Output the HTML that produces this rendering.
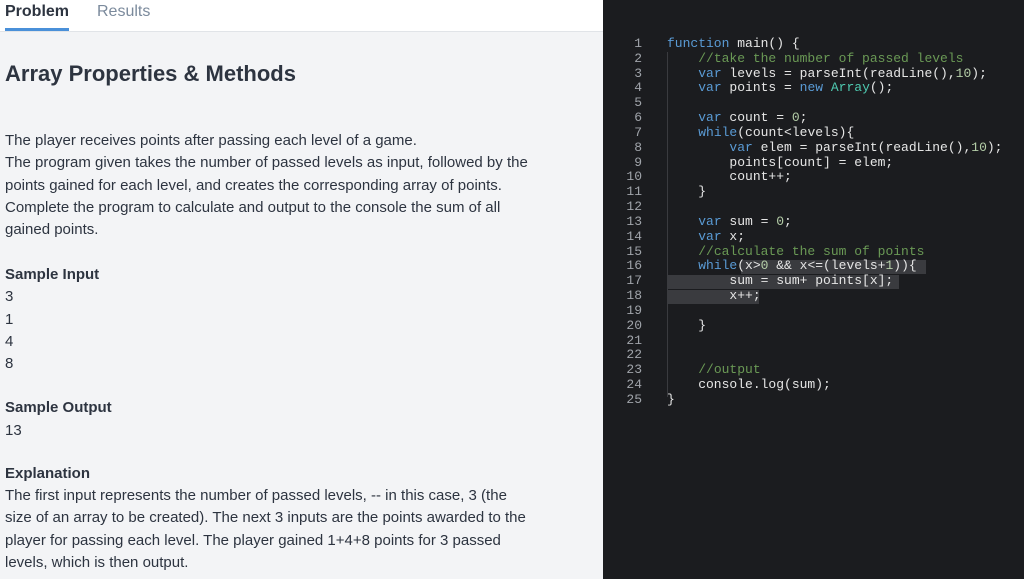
<!DOCTYPE html>
<html><head><meta charset="utf-8"><style>
body{margin:0;width:1024px;height:579px;overflow:hidden;font-family:"Liberation Sans",sans-serif;background:#f3f4f6;position:relative}
.hdr{position:absolute;left:0;top:0;width:603px;height:31px;background:#fff;border-bottom:1px solid #e1e4e8}
.tab{position:absolute;top:3px;font-size:16px}
.t{position:absolute;left:5px;font-size:15px;color:#2d3440;line-height:22.3px;white-space:nowrap}
.b{font-weight:bold}
.code{position:absolute;left:603px;top:0;width:421px;height:579px;background:#1b1c1f}
.ln{position:absolute;left:620px;top:37px;width:22px;text-align:right;font-family:"Liberation Mono",monospace;font-size:13px;line-height:14.83px;color:#a0a4aa}
.src{position:absolute;left:667px;top:37px;font-family:"Liberation Mono",monospace;font-size:13px;line-height:14.83px;color:#e6e6e6;white-space:pre}
.k{color:#5a9bd5}.c{color:#6a9955}.n{color:#b5cea8}.g{color:#4ec9b0}
.hl{position:absolute;background:#3a3b3f}
</style></head><body>
<div class="hdr"></div>
<div style="position:absolute;left:5px;top:28px;width:64px;height:3px;background:#4a90d9"></div>
<div class="tab b" style="left:5px;color:#2d3440">Problem</div>
<div class="tab" style="left:97px;color:#7b8a9c">Results</div>
<div class="t b" style="top:60px;font-size:22px;line-height:28px">Array Properties &amp; Methods</div>
<div class="t" style="top:130px">The player receives points after passing each level of a game.<br>The program given takes the number of passed levels as input, followed by the<br>points gained for each level, and creates the corresponding array of points.<br>Complete the program to calculate and output to the console the sum of all<br>gained points.</div>
<div class="t b" style="top:264px">Sample Input</div>
<div class="t" style="top:286px">3</div>
<div class="t" style="top:309px">1</div>
<div class="t" style="top:331px">4</div>
<div class="t" style="top:353px">8</div>
<div class="t b" style="top:397px">Sample Output</div>
<div class="t" style="top:420px">13</div>
<div class="t b" style="top:463px">Explanation</div>
<div class="t" style="top:485px">The first input represents the number of passed levels, -- in this case, 3 (the<br>size of an array to be created). The next 3 inputs are the points awarded to the<br>player for passing each level. The player gained 1+4+8 points for 3 passed<br>levels, which is then output.</div>
<div class="code"></div>
<div class="hl" style="left:741px;top:260px;width:185px;height:14px"></div>
<div class="hl" style="left:667px;top:275px;width:232px;height:14px"></div>
<div class="hl" style="left:667px;top:290px;width:92px;height:14px"></div>
<div style="position:absolute;left:667px;top:52px;width:1px;height:345px;background:#3a3b3f"></div>
<div class="ln">1<br>2<br>3<br>4<br>5<br>6<br>7<br>8<br>9<br>10<br>11<br>12<br>13<br>14<br>15<br>16<br>17<br>18<br>19<br>20<br>21<br>22<br>23<br>24<br>25</div>
<div class="src"><span class="k">function</span> main() {
    <span class="c">//take the number of passed levels</span>
    <span class="k">var</span> levels = parseInt(readLine(),<span class="n">10</span>);
    <span class="k">var</span> points = <span class="k">new</span> <span class="g">Array</span>();

    <span class="k">var</span> count = <span class="n">0</span>;
    <span class="k">while</span>(count&lt;levels){
        <span class="k">var</span> elem = parseInt(readLine(),<span class="n">10</span>);
        points[count] = elem;
        count++;
    }

    <span class="k">var</span> sum = <span class="n">0</span>;
    <span class="k">var</span> x;
    <span class="c">//calculate the sum of points</span>
    <span class="k">while</span>(x&gt;<span class="n">0</span> &amp;&amp; x&lt;=(levels+<span class="n">1</span>)){
        sum = sum+ points[x];
        x++;

    }


    <span class="c">//output</span>
    console.log(sum);
}</div>
</body></html>
